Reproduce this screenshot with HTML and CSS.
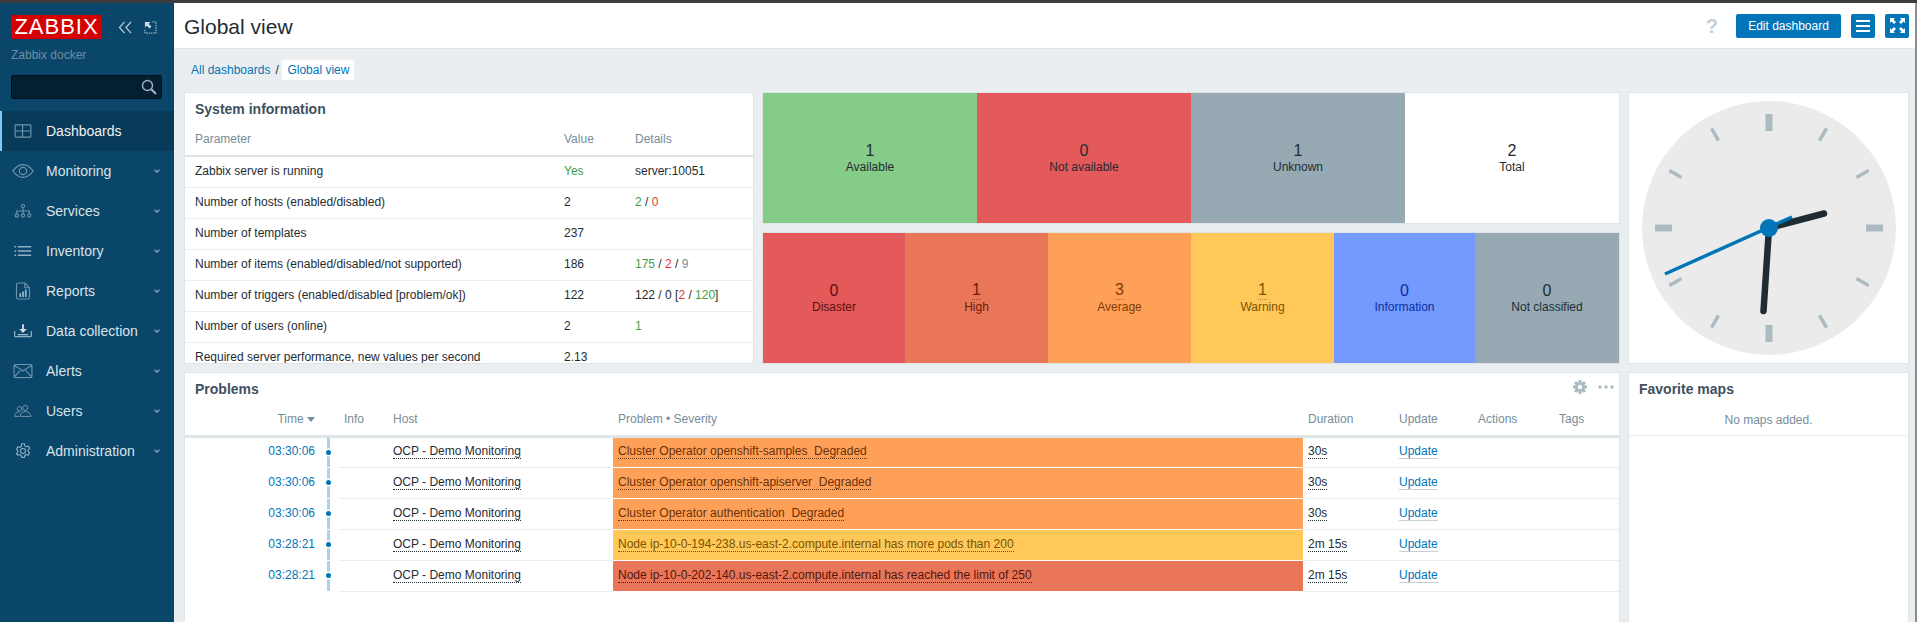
FILE: index.html
```html
<!DOCTYPE html>
<html lang="en">
<head>
<meta charset="utf-8">
<title>Global view</title>
<link rel="stylesheet" href="styles.css">
</head>
<body>
<div class="topstrip"></div>
<div class="app">
  <aside class="sidebar">
    <div class="brand">
      <div class="logo">ZABBIX</div>
      <svg class="collapse" width="15" height="13" viewBox="0 0 16 14"><path d="M7 1 1.500 7 7 13M14 1 8.500 7 14 13" fill="none" stroke="#b7c9d5" stroke-width="1.400"/></svg>
      <svg class="kiosk" width="13" height="13" viewBox="0 0 14 14"><path d="M1 1h6L5 3l3 3-2 2-3-3-2 2z" fill="#cfdbe3"/><path d="M9 1h4v12H1V9" fill="none" stroke="#cfdbe3" stroke-width="1" stroke-dasharray="1.500 1"/></svg>
    </div>
    <div class="server">Zabbix docker</div>
    <div class="search">
      <svg width="16" height="16" viewBox="0 0 16 16"><circle cx="6.500" cy="6.500" r="5" fill="none" stroke="#9fb3c0" stroke-width="1.400"/><path d="M10.300 10.300 15 15" stroke="#9fb3c0" stroke-width="2.200"/></svg>
    </div>
    <nav class="nav">
      <div class="nav-item active">
        <svg class="nav-icon" width="18" height="14" viewBox="0 0 20 16"><path d="M2 1h16a1 1 0 0 1 1 1v12a1 1 0 0 1-1 1H2a1 1 0 0 1-1-1V2a1 1 0 0 1 1-1zM9.500 1v14M1 8h18" fill="none" stroke="#6f95ad" stroke-width="1.300"/></svg>
        <span>Dashboards</span>
      </div>
      <div class="nav-item">
        <svg class="nav-icon" width="22" height="15" viewBox="0 0 24 16"><path d="M1 8c3-4.500 7-7 11-7s8 2.500 11 7c-3 4.500-7 7-11 7S4 12.500 1 8z" fill="none" stroke="#6f95ad" stroke-width="1.300"/><circle cx="12" cy="8" r="4" fill="none" stroke="#6f95ad" stroke-width="1.300"/></svg>
        <span>Monitoring</span><i class="chev"></i>
      </div>
      <div class="nav-item">
        <svg class="nav-icon" width="18" height="15" viewBox="0 0 20 16"><g fill="none" stroke="#6f95ad" stroke-width="1.200"><circle cx="10" cy="2.500" r="1.800"/><circle cx="3" cy="13" r="1.800"/><circle cx="10" cy="13" r="1.800"/><circle cx="17" cy="13" r="1.800"/><path d="M10 4.500v6.500M3 11V8h14v3"/></g></svg>
        <span>Services</span><i class="chev"></i>
      </div>
      <div class="nav-item">
        <svg class="nav-icon" width="18" height="12" viewBox="0 0 20 14"><path d="M0 2h2M0 7h2M0 12h2M4 2h15.500M4 7h15.500M4 12h15.500" stroke="#90b0c4" stroke-width="1.800"/></svg>
        <span>Inventory</span><i class="chev"></i>
      </div>
      <div class="nav-item">
        <svg class="nav-icon" width="15" height="18" viewBox="0 0 16 19"><path d="M3 1h7l5 5v10a2 2 0 0 1-2 2H3a2 2 0 0 1-2-2V3a2 2 0 0 1 2-2zM10 1v5h5" fill="none" stroke="#6f95ad" stroke-width="1.200"/><path d="M4 12h2v4H4zM7 10h2v6H7zM10 8h2v8h-2z" fill="#90b0c4"/></svg>
        <span>Reports</span><i class="chev"></i>
      </div>
      <div class="nav-item">
        <svg class="nav-icon" width="18" height="14" viewBox="0 0 19 14"><path d="M.700 7v5a1 1 0 0 0 1 1h15.600a1 1 0 0 0 1-1V7" fill="none" stroke="#90b0c4" stroke-width="1.300"/><path d="M8.500 0h2v5h3l-4 4-4-4h3zM4 10.500h11v1H4z" fill="#cfdbe3"/></svg>
        <span>Data collection</span><i class="chev"></i>
      </div>
      <div class="nav-item">
        <svg class="nav-icon" width="20" height="15" viewBox="0 0 21 16"><path d="M2.500 1h16A1.500 1.500 0 0 1 20 2.500v11a1.500 1.500 0 0 1-1.500 1.500h-16A1.500 1.500 0 0 1 1 13.500v-11A1.500 1.500 0 0 1 2.500 1zM1.500 2l9 6 9-6M1.500 14l6-6.500M19.500 14l-6-6.500" fill="none" stroke="#6f95ad" stroke-width="1.200"/></svg>
        <span>Alerts</span><i class="chev"></i>
      </div>
      <div class="nav-item">
        <svg class="nav-icon" width="18" height="13" viewBox="0 0 20 14"><g fill="none" stroke="#6f95ad" stroke-width="1.100"><circle cx="12.500" cy="3.500" r="2.800"/><circle cx="6" cy="4.500" r="2.500"/><path d="M7 13c0-3.500 2.500-5.500 5.500-5.500S18.500 10 19 13zM.700 13c.3-3 2-5 4-5 .8 0 1.500.2 2 .5M.700 13H6"/></g></svg>
        <span>Users</span><i class="chev"></i>
      </div>
      <div class="nav-item">
        <svg class="nav-icon" width="16" height="16" viewBox="0 0 16 16"><path d="M6.600.800h2.800l.4 2 1.600.9 1.900-.7 1.400 2.400-1.500 1.300v1.800l1.500 1.300-1.400 2.400-1.900-.7-1.600.9-.4 2H6.600l-.4-2-1.600-.9-1.900.7L1.300 10.600l1.500-1.300V7.500L1.300 6.200l1.400-2.400 1.900.7 1.600-.9z" fill="none" stroke="#90b0c4" stroke-width="1.100" stroke-linejoin="round"/><circle cx="8" cy="8" r="2.500" fill="none" stroke="#90b0c4" stroke-width="1.100"/></svg>
        <span>Administration</span><i class="chev"></i>
      </div>
    </nav>
  </aside>
  <div class="content">
    <header class="header">
      <h1>Global view</h1>
      <div class="actions">
        <span class="help">?</span>
        <button class="btn">Edit dashboard</button>
        <button class="btn square"><svg width="14" height="12" viewBox="0 0 14 12"><path d="M0 1h14M0 6h14M0 11h14" stroke="#fff" stroke-width="1.800"/></svg></button>
        <button class="btn square"><svg width="15" height="15" viewBox="0 0 15 15"><path d="M0 0h5L3.500 1.500 6 4 4 6 1.500 3.500 0 5zM15 0v5L13.500 3.500 11 6 9 4l2.500-2.500L10 0zM0 15v-5l1.500 1.500L4 9l2 2-2.500 2.500L5 15zM15 15h-5l1.500-1.500L9 11l2-2 2.500 2.500L15 10z" fill="#fff"/></svg></button>
      </div>
    </header>
    <main class="main">
      <div class="crumbs">
        <a class="link">All dashboards</a><span class="slash">/</span><a class="link current">Global view</a>
      </div>
      <div class="board">
        <section class="widget sysinfo">
          <h2>System information</h2>
          <table class="tbl">
            <thead><tr><th>Parameter</th><th>Value</th><th>Details</th></tr></thead>
            <tbody>
              <tr><td>Zabbix server is running</td><td class="green">Yes</td><td>server:10051</td></tr>
              <tr><td>Number of hosts (enabled/disabled)</td><td>2</td><td><span class="green">2</span> / <span class="red">0</span></td></tr>
              <tr><td>Number of templates</td><td>237</td><td></td></tr>
              <tr><td>Number of items (enabled/disabled/not supported)</td><td>186</td><td><span class="green">175</span> / <span class="red">2</span> / <span class="grey">9</span></td></tr>
              <tr><td>Number of triggers (enabled/disabled [problem/ok])</td><td>122</td><td>122 / 0 [<span class="red">2</span> / <span class="green">120</span>]</td></tr>
              <tr><td>Number of users (online)</td><td>2</td><td class="green">1</td></tr>
              <tr><td>Required server performance, new values per second</td><td>2.13</td><td></td></tr>
            </tbody>
          </table>
        </section>
        <div class="tiles">
          <section class="widget tilegroup four">
            <div class="tile t-green"><b>1</b><span>Available</span></div>
            <div class="tile t-red"><b>0</b><span>Not available</span></div>
            <div class="tile t-grey"><b>1</b><span>Unknown</span></div>
            <div class="tile"><b>2</b><span>Total</span></div>
          </section>
          <section class="widget tilegroup six">
            <div class="tile t-red c-disaster"><b>0</b><span>Disaster</span></div>
            <div class="tile t-high c-high"><b class="dotted">1</b><span>High</span></div>
            <div class="tile t-avg c-avg"><b class="dotted">3</b><span>Average</span></div>
            <div class="tile t-warn c-warn"><b class="dotted">1</b><span>Warning</span></div>
            <div class="tile t-info c-info"><b>0</b><span>Information</span></div>
            <div class="tile t-grey c-nc"><b>0</b><span>Not classified</span></div>
          </section>
        </div>
        <section class="widget clock">
          <svg width="254" height="254" viewBox="-127 -127 254 254">
            <circle r="127" fill="#ebebeb"/>
            <g fill="#acbbc2">
              <rect x="-3.500" y="-114" width="7" height="17"/>
              <rect x="-3.500" y="-114" width="7" height="17" transform="rotate(90)"/>
              <rect x="-3.500" y="-114" width="7" height="17" transform="rotate(180)"/>
              <rect x="-3.500" y="-114" width="7" height="17" transform="rotate(270)"/>
              <rect x="-1.750" y="-115" width="3.500" height="14" transform="rotate(30)"/>
              <rect x="-1.750" y="-115" width="3.500" height="14" transform="rotate(60)"/>
              <rect x="-1.750" y="-115" width="3.500" height="14" transform="rotate(120)"/>
              <rect x="-1.750" y="-115" width="3.500" height="14" transform="rotate(150)"/>
              <rect x="-1.750" y="-115" width="3.500" height="14" transform="rotate(210)"/>
              <rect x="-1.750" y="-115" width="3.500" height="14" transform="rotate(240)"/>
              <rect x="-1.750" y="-115" width="3.500" height="14" transform="rotate(300)"/>
              <rect x="-1.750" y="-115" width="3.500" height="14" transform="rotate(330)"/>
            </g>
            <path d="M0 0 55-14.500" stroke="#1f2c33" stroke-width="6.500" stroke-linecap="round"/>
            <path d="M0 0-5.500 83" stroke="#1f2c33" stroke-width="6.500" stroke-linecap="round"/>
            <path d="M23-11-104 46" stroke="#0275b8" stroke-width="3.500"/>
            <circle r="9" fill="#0275b8"/>
          </svg>
        </section>
        <section class="widget problems">
          <h2>Problems</h2>
          <div class="widget-tools">
            <svg width="14" height="14" viewBox="-7 -7 14 14"><g fill="#acbbc2"><circle r="5"/><rect x="-1.500" y="-7" width="3" height="14"/><rect x="-1.500" y="-7" width="3" height="14" transform="rotate(45)"/><rect x="-1.500" y="-7" width="3" height="14" transform="rotate(90)"/><rect x="-1.500" y="-7" width="3" height="14" transform="rotate(135)"/></g><circle r="2.200" fill="#fff"/></svg>
            <svg width="16" height="4" viewBox="0 0 16 4"><circle cx="2" cy="2" r="1.700" fill="#acbbc2"/><circle cx="8" cy="2" r="1.700" fill="#acbbc2"/><circle cx="14" cy="2" r="1.700" fill="#acbbc2"/></svg>
          </div>
          <table class="ptbl">
            <colgroup><col class="c1"><col class="c2"><col class="c3"><col class="c4"><col class="c5"><col class="c6"><col class="c7"><col class="c8"><col class="c9"></colgroup>
            <thead><tr><th class="tm">Time <i class="sort"></i></th><th class="tl"></th><th>Info</th><th>Host</th><th>Problem • Severity</th><th>Duration</th><th>Update</th><th>Actions</th><th>Tags</th></tr></thead>
            <tbody>
              <tr><td class="tm"><a class="link">03:30:06</a></td><td class="tl"><i></i></td><td></td><td><u>OCP - Demo Monitoring</u></td><td class="sev-avg"><u>Cluster Operator openshift-samples&nbsp; Degraded</u></td><td><u>30s</u></td><td><a class="link upd">Update</a></td><td></td><td></td></tr>
              <tr><td class="tm"><a class="link">03:30:06</a></td><td class="tl"><i></i></td><td></td><td><u>OCP - Demo Monitoring</u></td><td class="sev-avg"><u>Cluster Operator openshift-apiserver&nbsp; Degraded</u></td><td><u>30s</u></td><td><a class="link upd">Update</a></td><td></td><td></td></tr>
              <tr><td class="tm"><a class="link">03:30:06</a></td><td class="tl"><i></i></td><td></td><td><u>OCP - Demo Monitoring</u></td><td class="sev-avg"><u>Cluster Operator authentication&nbsp; Degraded</u></td><td><u>30s</u></td><td><a class="link upd">Update</a></td><td></td><td></td></tr>
              <tr><td class="tm"><a class="link">03:28:21</a></td><td class="tl"><i></i></td><td></td><td><u>OCP - Demo Monitoring</u></td><td class="sev-warn"><u>Node ip-10-0-194-238.us-east-2.compute.internal has more pods than 200</u></td><td><u>2m 15s</u></td><td><a class="link upd">Update</a></td><td></td><td></td></tr>
              <tr><td class="tm"><a class="link">03:28:21</a></td><td class="tl"><i></i></td><td></td><td><u>OCP - Demo Monitoring</u></td><td class="sev-high"><u>Node ip-10-0-202-140.us-east-2.compute.internal has reached the limit of 250</u></td><td><u>2m 15s</u></td><td><a class="link upd">Update</a></td><td></td><td></td></tr>
            </tbody>
          </table>
        </section>
        <section class="widget maps">
          <h2>Favorite maps</h2>
          <div class="nomaps">No maps added.</div>
        </section>
      </div>
    </main>
  </div>
  <div class="scrollbar"></div>
</div>
</body>
</html>
```

FILE: styles.css
```css
* { box-sizing: border-box; }
html, body { margin: 0; height: 622px; overflow: hidden; }
body { font-family: "Liberation Sans", Arial, sans-serif; font-size: 12px; color: #1f2c33; background: #ebeef0; display: flex; flex-direction: column; }
.topstrip { height: 3px; background: #3d3d3d; flex: none; }
.app { flex: 1; display: flex; min-height: 0; }

.sidebar { width: 174px; flex: none; background: #0a466a; color: #f2f2f2; }
.brand { display: flex; align-items: center; padding: 12px 0 0 11px; height: 36px; }
.logo { width: 91px; height: 24px; background: #d40000; color: #fff; font-size: 22px; line-height: 24px; text-align: center; letter-spacing: 1px; font-weight: 400; }
.collapse { margin-left: 16px; }
.kiosk { margin-left: 11px; }
.server { color: #6f8fa3; font-size: 12px; padding: 9px 0 0 11px; line-height: 14px; }
.search { margin: 13px 12px 0 11px; height: 24px; background: #031f30; border: 1px solid #02121c; border-radius: 2px; display: flex; align-items: center; justify-content: flex-end; padding-right: 4px; }
.nav { margin-top: 12px; }
.nav-item { height: 40px; display: flex; align-items: center; position: relative; padding-left: 46px; font-size: 14px; color: #d9e3e9; }
.nav-item.active { background: #083a59; box-shadow: inset 2px 0 0 #7fc8f8; color: #f2f2f2; }
.nav-icon { position: absolute; left: 23px; top: 50%; transform: translate(-50%, -50%); }
.chev { position: absolute; left: 155px; top: 17px; width: 4px; height: 4px; border-right: 1.200px solid #9fb8c7; border-bottom: 1.200px solid #9fb8c7; transform: rotate(45deg); }

.content { flex: 1; min-width: 0; display: flex; flex-direction: column; }
.header { height: 46px; flex: none; background: #fff; border-bottom: 1px solid #dfe4e7; display: flex; align-items: center; justify-content: space-between; padding: 0 6px 0 10px; }
.header h1 { margin: 2px 0 0; font-size: 21px; font-weight: 400; color: #1f2c33; }
.actions { display: flex; align-items: center; }
.help { font-size: 20px; font-weight: 700; color: #c5d0d6; margin: 2px 18px 0 0; }
.btn { height: 24px; border: 0; border-radius: 2px; background: #0275b8; color: #fff; font: 12px "Liberation Sans", Arial, sans-serif; padding: 0 12px; margin-left: 10px; display: flex; align-items: center; justify-content: center; }
.help + .btn { margin-left: 0; width: 105px; padding: 0; }
.btn.square { width: 24px; padding: 0; }

.main { flex: 1; min-height: 0; padding: 10px 6px 0 10px; }
.crumbs { height: 22px; display: flex; align-items: center; padding-left: 7px; }
.link { color: #0275b8; }
.slash { margin-left: 5px; width: 6px; color: #1f2c33; }
.current { background: #fff; border: 1px solid #eef1f3; border-radius: 2px; height: 22px; line-height: 20px; padding: 0 5px; }

.board { margin-top: 11px; display: grid; grid-template-columns: 570px 858px 281px; grid-template-rows: 272px 260px; gap: 8px; }
.widget { background: #fff; border: 1px solid #dfe4e7; overflow: hidden; position: relative; }
.widget h2 { margin: 0; font-size: 14px; font-weight: 700; color: #40505e; padding: 8px 0 0 10px; height: 32px; line-height: 16px; }

.tbl { width: 100%; border-collapse: collapse; table-layout: fixed; }
.tbl th { text-align: left; font-weight: 400; color: #768d99; height: 31px; padding: 0 0 2px 10px; border-bottom: 2px solid #dfe4e7; }
.tbl td { height: 31px; padding: 0 0 2px 10px; border-bottom: 1px solid #ebeef0; }
.tbl th:first-child, .tbl td:first-child { width: 370px; }
.tbl th:nth-child(2), .tbl td:nth-child(2) { width: 70px; padding-left: 9px; }
.green { color: #429e47; }
.red { color: #e33734; }
.grey { color: #768d99; }

.tiles { display: grid; grid-template-rows: 132px 132px; gap: 8px; }
.tilegroup { display: grid; background: #fff; }
.four { grid-template-columns: 214px 214px 214px 1fr; }
.six { grid-template-columns: 142px 143px 143px 143px 141px 1fr; }
.tile { display: flex; flex-direction: column; align-items: center; justify-content: center; }
.tile b { font-size: 16px; font-weight: 400; line-height: 19px; }
.tile span { font-size: 12px; line-height: 15px; }
.t-green { background: #86cc89; }
.t-red { background: #e45959; }
.t-grey { background: #97aab3; }
.t-high { background: #e97659; }
.t-avg { background: #ffa059; }
.t-warn { background: #ffc859; }
.t-info { background: #7499ff; }
.c-disaster { color: #5a1010; }
.c-high { color: #6a1c08; }
.c-avg { color: #7f3a05; }
.c-warn { color: #7a5500; }
.c-info { color: #0c2fa0; }
.c-nc { color: #1f2c33; }
.dotted { border-bottom: 1px dotted rgba(0, 0, 0, .35); line-height: 18px !important; }

.clock { display: flex; align-items: center; justify-content: center; }

.problems { grid-column: 1 / 3; }
.widget-tools { position: absolute; right: 5px; top: 7px; display: flex; align-items: center; gap: 11px; }
.ptbl { width: 100%; border-collapse: collapse; table-layout: fixed; }
.c1 { width: 130px; } .c2 { width: 24px; } .c3 { width: 49px; } .c4 { width: 225px; } .c5 { width: 690px; }
.c6 { width: 91px; } .c7 { width: 79px; } .c8 { width: 81px; } .c9 { width: 65px; }
.ptbl th { text-align: left; font-weight: 400; color: #768d99; height: 31px; padding: 0 0 2px 5px; border-bottom: 3px solid #dfe4e7; }
.ptbl td { height: 31px; padding: 0 0 2px 5px; border-bottom: 1px solid #ebeef0; white-space: nowrap; overflow: hidden; }
.ptbl .tm { text-align: right; padding: 0 0 2px; border-bottom-color: transparent; }
.ptbl thead .tm { border-bottom-color: #dfe4e7; }
.ptbl td.tl { padding: 0; position: relative; border-bottom-color: transparent; }
.tl i { position: absolute; left: 12px; top: 0; bottom: -1px; width: 3px; background: #a5d4ee; }
.tl i::after { content: ""; position: absolute; left: -1px; top: 12px; width: 5px; height: 5px; border-radius: 50%; background: #0275b8; box-shadow: 0 0 0 1.500px #fff; }
.ptbl td u { text-decoration: none; border-bottom: 1px dotted currentColor; }
.ptbl td .upd { border-bottom: 1px solid #c5d1d8; }
.sort { display: inline-block; width: 0; height: 0; border: 4px solid transparent; border-top: 5px solid #768d99; border-bottom: 0; vertical-align: 1px; }
.sev-avg { background: #ffa059; color: #6a3206; }
.sev-warn { background: #ffc859; color: #7a5500; }
.sev-high { background: #e97659; color: #52170a; }
.ptbl td.sev-avg, .ptbl td.sev-warn, .ptbl td.sev-high { border-bottom-color: #fff; }

.nomaps { height: 31px; text-align: center; line-height: 30px; color: #768d99; border-bottom: 1px solid #ebeef0; }

.scrollbar { width: 2px; flex: none; background: #8c8c8c; }
```
